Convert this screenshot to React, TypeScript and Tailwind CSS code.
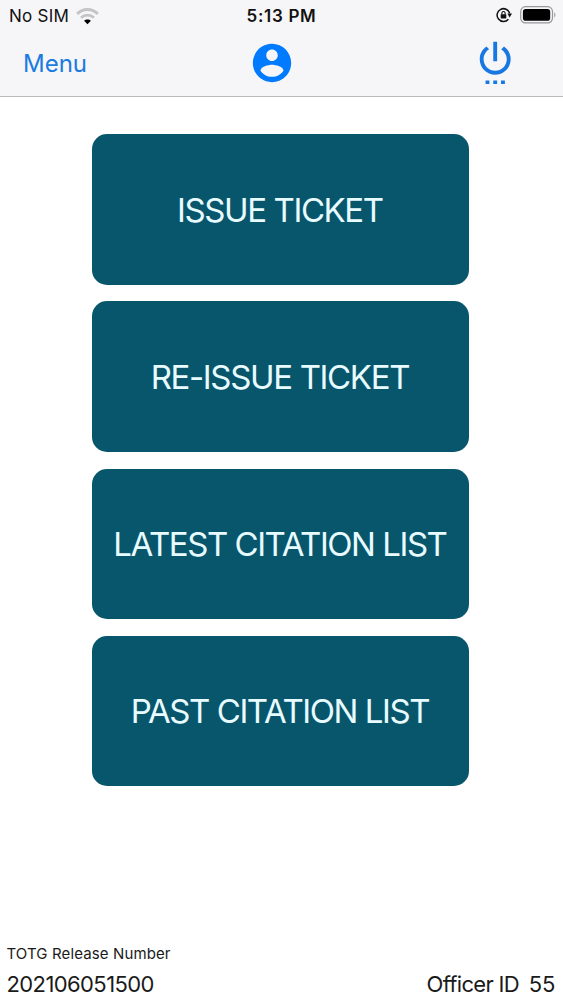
import React from "react";

const actions = [
  { label: "ISSUE TICKET", className: "tracking-[-1.4px]" },
  { label: "RE-ISSUE TICKET", className: "tracking-[-1.35px]" },
  { label: "LATEST CITATION LIST", className: "tracking-[-1.47px]" },
  { label: "PAST CITATION LIST", className: "tracking-[-1.44px]" },
];

function WifiIcon() {
  return (
    <svg className="block h-[17px] w-[23px]" viewBox="0 0 23 17" fill="none">
      <path d="M1.2 5.9C7 0.1 16 0.1 21.8 5.9" stroke="#c4c4c6" strokeWidth="3" />
      <path d="M5 9.8C8.7 6.3 14.3 6.3 18 9.8" stroke="#c4c4c6" strokeWidth="2.8" />
      <path d="M11.5 16.2L8.1 12.8C9.9 11.1 13.1 11.1 14.9 12.8Z" fill="#000" />
    </svg>
  );
}

function RotationLockIcon() {
  return (
    <svg className="block h-4 w-4" viewBox="0 0 16 16" fill="none">
      <path d="M12.4 12.2A6.4 6.4 0 1 1 13.7 6.4" stroke="#111" strokeWidth="1.5" />
      <path d="M11.4 6.4h4.6L13.6 10.4z" fill="#111" />
      <rect x="4.7" y="7.2" width="5.6" height="4.2" rx="0.6" fill="#111" />
      <path d="M5.9 7.4V6.1a1.6 1.6 0 0 1 3.2 0v1.3" stroke="#111" strokeWidth="1.1" />
    </svg>
  );
}

function BatteryIcon() {
  return (
    <svg className="block h-[18px] w-9" viewBox="0 0 36 18" fill="none">
      <rect x="0.7" y="0.7" width="31.8" height="16.2" rx="4.8" stroke="#98989a" strokeWidth="1.2" />
      <rect x="2.9" y="2.9" width="27.3" height="11.8" rx="2.8" fill="#000" />
      <path d="M34.3 6.2c1.5 0.8 1.5 4.4 0 5.2z" fill="#98989a" />
    </svg>
  );
}

function AccountIcon() {
  return (
    <svg className="block h-[46px] w-[46px]" viewBox="0 0 24 24" fill="#007aff">
      <path d="M12 2C6.48 2 2 6.48 2 12s4.48 10 10 10 10-4.48 10-10S17.52 2 12 2zm0 3c1.66 0 3 1.34 3 3s-1.34 3-3 3-3-1.34-3-3 1.34-3 3-3zm0 14.2c-2.5 0-4.71-1.28-6-3.22.03-1.99 4-3.08 6-3.08 1.99 0 5.97 1.09 6 3.08-1.29 1.94-3.5 3.22-6 3.22z" />
    </svg>
  );
}

function PowerIcon() {
  return (
    <svg className="block h-[46.4px] w-[46.4px]" viewBox="0 0 24 24" fill="#1678e0">
      <path d="M7 24h2v-2H7v2zm4 0h2v-2h-2v2zm2-22h-2v10h2V2zm3.56 2.44l-1.45 1.45C16.84 6.94 18 8.83 18 11c0 3.31-2.69 6-6 6s-6-2.69-6-6c0-2.17 1.16-4.06 2.88-5.12L7.44 4.44C5.36 5.88 4 8.28 4 11c0 4.42 3.58 8 8 8s8-3.58 8-8c0-2.72-1.36-5.12-3.44-6.56zM15 24h2v-2h-2v2z" />
    </svg>
  );
}

function StatusBar() {
  return (
    <div className="grid h-8 grid-cols-3 items-center pl-[9px] pr-[7px] text-[17px] leading-8 text-[#111]">
      <div className="flex items-center gap-[7px]">
        <span className="tracking-[0.25px]">No SIM</span>
        <WifiIcon />
      </div>
      <div className="pr-[2px] text-center font-semibold tracking-[0.7px]">5:13 PM</div>
      <div className="flex items-center justify-end gap-2 pb-[2px]">
        <RotationLockIcon />
        <BatteryIcon />
      </div>
    </div>
  );
}

function NavBar() {
  return (
    <nav className="flex h-16 items-center pl-[23px] pr-[45px]">
      <button className="w-[226px] text-left text-2xl text-[#1a7be0]">Menu</button>
      <button aria-label="Account" className="pb-[3px]">
        <AccountIcon />
      </button>
      <button aria-label="Log out" className="ml-auto pb-[6px]">
        <PowerIcon />
      </button>
    </nav>
  );
}

export default function App() {
  return (
    <div className="flex h-[1000px] w-[563px] flex-col bg-white font-['Inter',sans-serif]">
      <header className="h-[97px] border-b border-[#b9b9bb] bg-[#f6f6f8]">
        <StatusBar />
        <NavBar />
      </header>

      <main className="flex flex-1 flex-col gap-[16.7px] pl-[92.3px] pt-[37.2px]">
        {actions.map((action) => (
          <button
            key={action.label}
            className="flex h-[150.5px] w-[377.2px] items-center justify-center rounded-[15px] bg-[#08566c] pr-[2px] pt-[2px] text-[33px] text-[#e8fbff]"
          >
            <span className={action.className}>{action.label}</span>
          </button>
        ))}
      </main>

      <footer className="pb-[2px] pl-[6.5px] pr-2 text-[#1a1a1a]">
        <div className="text-[15px] leading-6 tracking-[0.12px]">TOTG Release Number</div>
        <div className="flex justify-between pt-1 text-[22px] leading-7 tracking-[-0.6px]">
          <span>202106051500</span>
          <div className="flex gap-[10px]">
            <span className="tracking-[-0.7px]">Officer ID</span>
            <span className="tracking-[-0.3px]">55</span>
          </div>
        </div>
      </footer>
    </div>
  );
}
